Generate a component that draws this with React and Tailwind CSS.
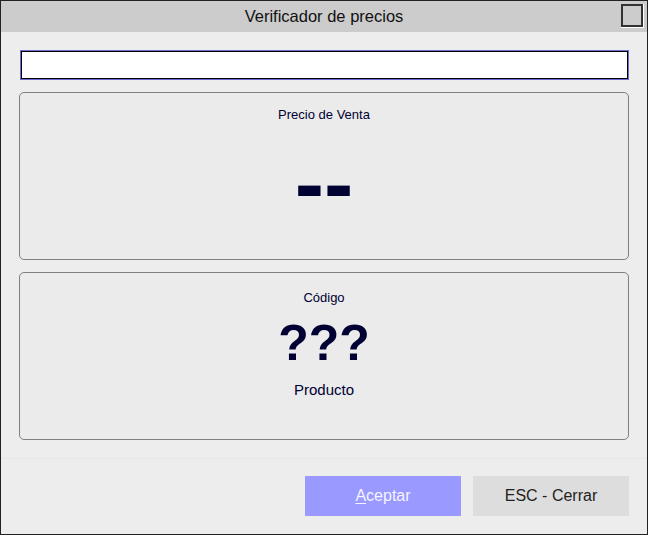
import React from 'react';

const font = { fontFamily: '"Liberation Sans", Arial, sans-serif' };

function CloseBox() {
    return (
        <div className="w-[23px] h-[24px] border border-white border-l-0 border-t-0">
            <div className="w-full h-full border-2 border-[#333] bg-[#cccccc]" />
        </div>
    );
}

export default function App() {
    return (
        <div
            className="w-[648px] h-[535px] border border-[#222] bg-[#ededed] flex flex-col"
            style={font}
        >
            {/* Title bar */}
            <div className="h-[31px] bg-[#cccccc] grid grid-cols-[1fr_auto_1fr] items-center">
                <div />
                <div className="text-[16.5px] text-[#111] leading-none pb-[1px]">Verificador de precios</div>
                <div className="justify-self-end mr-[3px] mt-[-2px]">
                    <CloseBox />
                </div>
            </div>

            {/* Body */}
            <div className="flex flex-col px-[18px] pt-[18px]">
                <div className="ml-[1px] h-[30px] border border-[#6a6ad0] bg-white">
                    <input className="w-full h-full border border-black bg-white outline-none px-1 text-sm" />
                </div>

                <div className="mt-[12px] h-[168px] border border-[#808080] rounded-[5px] bg-[#ebebeb] flex flex-col items-center">
                    <div className="mt-[12px] text-[13px] text-[#000033]">Precio de Venta</div>
                    <div className="mt-[14px] text-[88px] font-bold leading-none text-[#000033]">--</div>
                </div>

                <div className="mt-[12px] h-[168px] border border-[#808080] rounded-[5px] bg-[#ebebeb] flex flex-col items-center">
                    <div className="mt-[15px] text-[13px] text-[#000033]">Código</div>
                    <div className="mt-[10px] text-[50px] font-bold leading-none text-[#000033]">???</div>
                    <div className="mt-[11px] text-[15px] text-[#000033]">Producto</div>
                </div>
            </div>

            {/* Footer */}
            <div className="mt-[18px] border-t border-[#e6e6e6] flex justify-end gap-[12px] px-[18px] pt-[17px]">
                <button className="w-[156px] h-[40px] bg-[#9999ff] text-[16px] text-[#f4f4ff]">
                    <span className="underline underline-offset-2">A</span>ceptar
                </button>
                <button className="w-[156px] h-[40px] bg-[#dddddd] text-[16px] text-[#222]">
                    ESC - Cerrar
                </button>
            </div>
        </div>
    );
}
